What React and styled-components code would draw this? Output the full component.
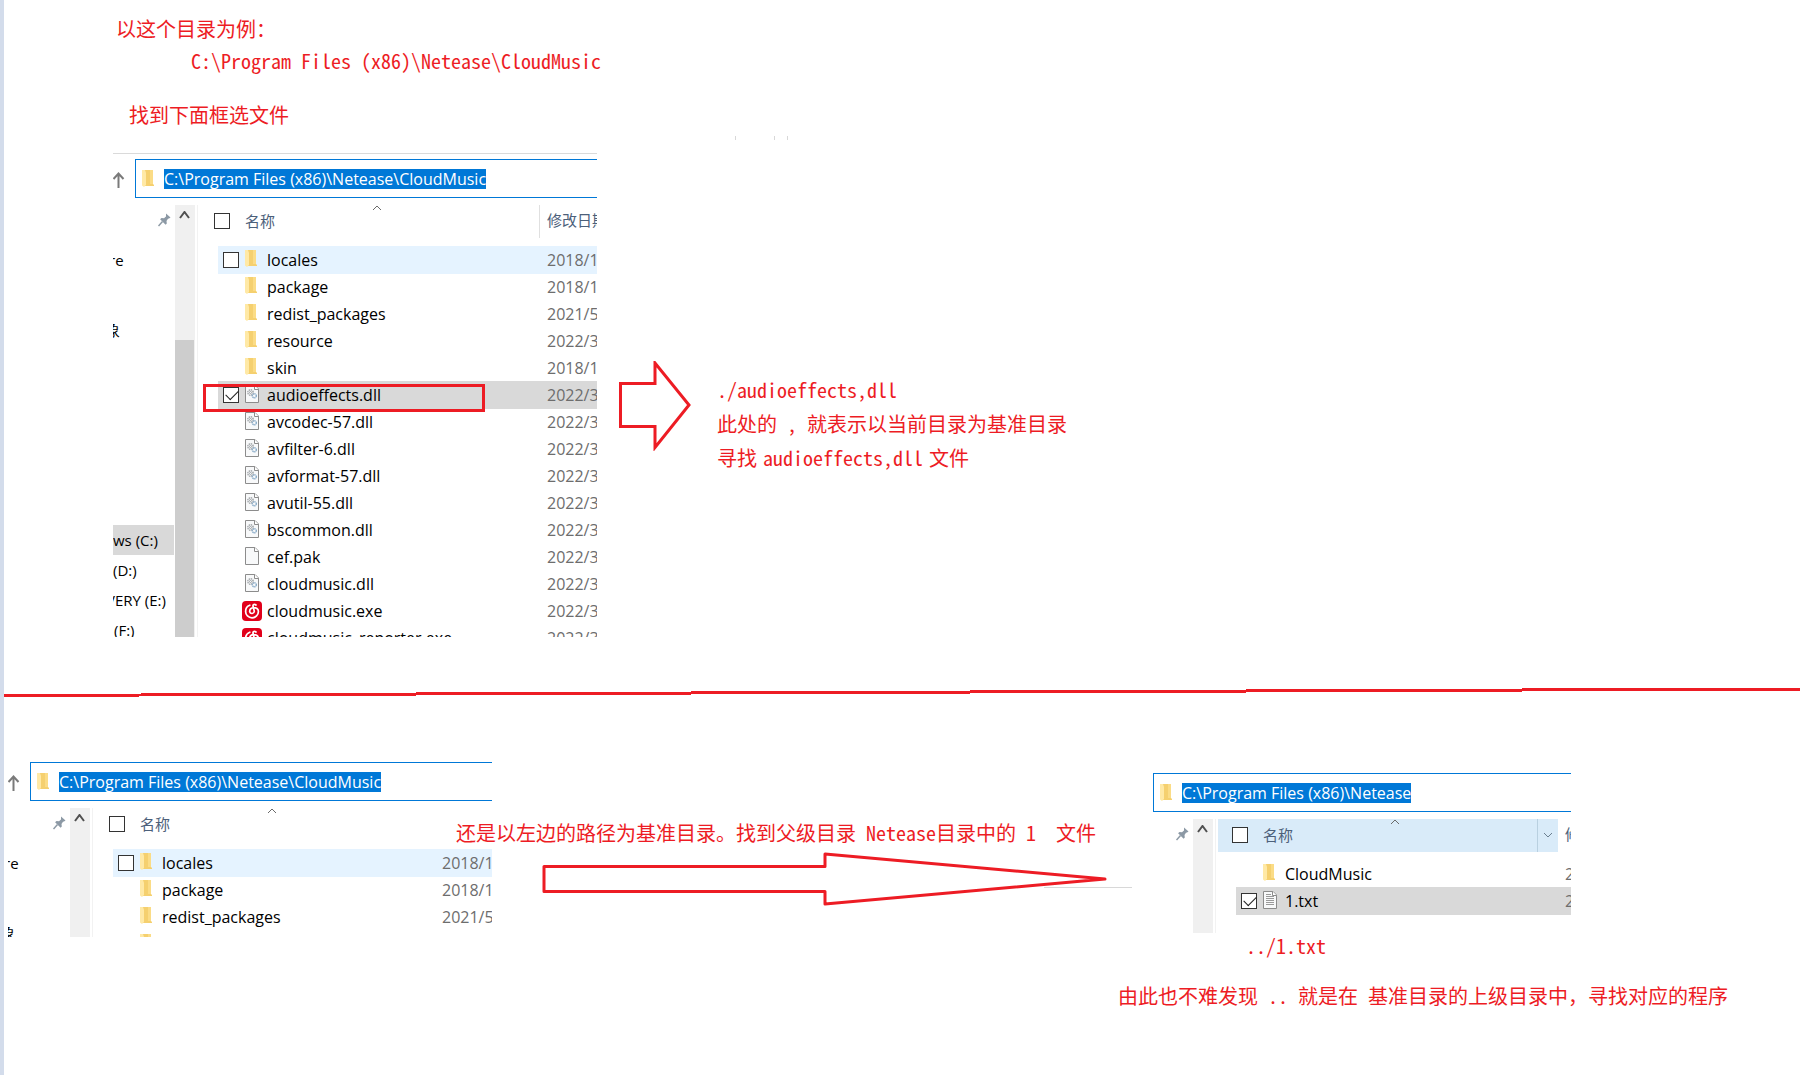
import React from 'react'
import styled, { createGlobalStyle } from 'styled-components'

const GlobalStyle = createGlobalStyle`
    * {
        box-sizing: border-box;
    }
    body {
        margin: 0;
        background-color: white;
        font-family: "Open Sans", "Noto Sans", "Noto Sans CJK SC", sans-serif;
    }
`
const Page = styled.div`
    display: flex;
    min-height: 100vh;
    overflow: hidden;
`
const Edge = styled.div`
    flex: none;
    width: 4px;
    background-color: #d3dceb;
`
const Canvas = styled.main`
    flex: 1;
    min-width: 0;
`
const Note = styled.p`
    margin: ${(props) => props.$top || 0}px 0 0 ${(props) => props.$left || 0}px;
    font-family: "Noto Sans Mono CJK SC", "Noto Sans CJK SC", monospace;
    font-size: 20px;
    line-height: 30px;
    white-space: pre;
    color: #ed1c24;
`
const Inline = styled.div`
    display: flex;
    gap: 6px;
`
const TopPart = styled.section`
    position: relative;
    padding: 14px 0 0 109px;
`
const Marks = styled.svg`
    position: absolute;
    left: 731px;
    top: 136px;
`
const TopRow = styled.div`
    display: flex;
    align-items: flex-start;
    margin-top: 22px;
`
const FirstArrow = styled.svg`
    flex: none;
    margin: 209px 26px 0 22px;
`
const TopNotes = styled.div`
    display: flex;
    flex-direction: column;
    gap: 4px;
    margin-top: 223px;
`
const Divider = styled.svg`
    display: block;
    width: 100%;
    height: 14px;
    margin: 49px 0 62px;
`
const BottomPart = styled.section`
    display: flex;
    align-items: flex-start;
    padding: 0 72px 0 4px;
`
const Middle = styled.div`
    position: relative;
    flex: 1;
    min-width: 660px;
    margin: 56px 0 0 -36px;
`
const LongArrow = styled.svg`
    display: block;
    margin: 3px 0 0 86px;
`
const Right = styled.div`
    flex: none;
    width: 610px;
    padding-top: 11px;
`

const Panel = styled.div`
    position: relative;
    flex: none;
    width: ${(props) => props.$width}px;
    height: ${(props) => props.$height}px;
    margin-left: ${(props) => props.$left || 0}px;
    overflow: hidden;
    background-color: white;
`
const TopLine = styled.div`
    height: 7px;
    border-top: 1px solid white;
    box-shadow: inset 0 1px 0 #dadada;
`
const AddressRow = styled.div`
    display: flex;
    align-items: center;
    height: 39px;
`
const UpButton = styled.button`
    display: flex;
    width: 22px;
    padding: 3px 0 0;
    border: 0;
    background: none;
`
const AddressBox = styled.div`
    flex: 1;
    display: flex;
    align-items: center;
    height: 39px;
    padding-left: 6px;
    border: 1px solid #0078d7;
    border-right: 0;
`
const AddressInput = styled.input`
    field-sizing: content;
    height: 20px;
    margin-left: 8px;
    padding: 0;
    border: 0;
    outline: 0;
    background-color: #0078d7;
    color: white;
    font-family: inherit;
    font-size: 16px;
    line-height: 20px;
`
const Body = styled.div`
    display: flex;
    height: 100%;
    margin-top: 7px;
`
const Tree = styled.div`
    flex: none;
    width: ${(props) => props.$width}px;
`
const PinBox = styled.div`
    display: flex;
    justify-content: flex-end;
    height: 40px;
    padding: 8px 4px 0 0;
`
const TreeItem = styled.div`
    height: 30px;
    width: 61px;
    margin-top: ${(props) => props.$top || 0}px;
    overflow: hidden;
    font-size: 15px;
    line-height: 30px;
    white-space: nowrap;
    text-indent: ${(props) => props.$cut || 0}px;
    background-color: ${(props) => (props.$on ? '#d9d9d9' : 'transparent')};
`
const ScrollBar = styled.div`
    flex: none;
    width: 20px;
    background-color: #f0f0f0;
`
const ScrollButton = styled.button`
    display: flex;
    justify-content: center;
    width: 19px;
    height: 135px;
    padding: 6px 0 0;
    border: 0;
    background: none;
`
const Thumb = styled.div`
    width: 19px;
    height: 100%;
    background-color: #cdcdcd;
`
const FileTable = styled.table`
    flex: none;
    display: block;
    margin-left: 2px;
    padding-left: 2px;
    border-left: 1px solid #f2f2f2;
    border-spacing: 0;
    thead, tbody {
        display: block;
    }
    th, td {
        padding: 0;
        font-weight: normal;
        text-align: left;
        white-space: nowrap;
    }
`
const HeadRow = styled.tr`
    display: flex;
    height: 33px;
    margin-bottom: 8px;
    font-size: 15px;
    line-height: 30px;
    color: #4c607a;
`
const HeadName = styled.th`
    position: relative;
    display: flex;
    align-items: center;
    gap: 15px;
    width: 340px;
    padding: 0 0 1px 14px !important;
    background-color: ${(props) => (props.$hot ? '#d9ebf9' : 'transparent')};
    border-right: 1px solid ${(props) => (props.$line ? '#e0e0e0' : 'transparent')};
`
const SortMark = styled.svg`
    position: absolute;
    left: 172px;
    top: 0;
`
const DropButton = styled.button`
    display: flex;
    align-items: center;
    justify-content: center;
    width: 20px;
    height: 33px;
    margin-left: auto;
    padding: 0;
    border: 0;
    border-left: 1px solid #b9d0e0;
    background: none;
`
const HeadDate = styled.th`
    padding-left: 7px !important;
`
const Row = styled.tr`
    display: flex;
    height: 28px;
    margin: 0 0 -1px 18px;
    font-size: 16px;
    line-height: 28px;
    background-color: ${(props) => props.$bg || 'transparent'};
`
const NameCell = styled.td`
    display: flex;
    align-items: center;
    width: 321px;
`
const CheckSlot = styled.span`
    display: flex;
    width: 24px;
    padding-left: 5px;
`
const Check = styled.input`
    appearance: none;
    flex: none;
    display: block;
    width: 16px;
    height: 16px;
    margin: 0;
    border: 1px solid #333;
    background-color: white;
    &:checked::after {
        content: "";
        display: block;
        width: 11px;
        height: 6px;
        margin: 2px 0 0 2px;
        border-left: 1px solid #222;
        border-bottom: 1px solid #222;
        transform: rotate(-45deg);
    }
`
const IconSlot = styled.span`
    display: flex;
    justify-content: center;
    width: 20px;
    height: 20px;
    margin-right: 5px;
    svg {
        flex: none;
    }
`
const DateCell = styled.td`
    padding-left: 8px !important;
    color: #6d6d6d;
`
const RedBox = styled.div`
    position: absolute;
    left: 90px;
    top: 232px;
    width: 282px;
    height: 28px;
    border: 3px solid #ed1c24;
`

const FolderIcon = () => (
    <svg width="14" height="18" viewBox="1 0 14 18">
        <path d="M4 0h8v14l1 1v1H4z" fill="#f5d06f" />
        <path d="M9 0h3v14h-3z" fill="#fbdc86" />
        <path d="M1 0h3l1 3v12l-2 2-2-1.500z" fill="#ffe9a6" />
    </svg>
)

const FileIcon = ({ kind }) => (
    <svg width="14" height="18" viewBox="0 0 14 18">
        <path d="M.5.5h9.500l3.500 3.500v13.500H.5z" fill="#f8f9fa" stroke="#8c8c8c" />
        <path d="M9.500.5v4h4" fill="#fff" stroke="#8c8c8c" />
        {kind === 'dll' && (
            <g fill="none">
                <circle cx="5.500" cy="7.500" r="2.700" stroke="#9a9fa3" strokeDasharray="1.400 .7" strokeWidth="1.400" />
                <circle cx="5.500" cy="7.500" r="1" stroke="#8d9296" strokeWidth=".8" />
                <circle cx="9.300" cy="10.800" r="2" stroke="#86a9c6" strokeDasharray="1.200 .5" strokeWidth="1.400" />
            </g>
        )}
        {kind === 'txt' && (
            <path d="M3 3.500h5M3 5.500h8M3 7.500h8M3 9.500h8M3 11.500h8M3 13.500h8" stroke="#9a9a9a" />
        )}
    </svg>
)

const MusicIcon = () => (
    <svg width="20" height="20" viewBox="0 0 20 20">
        <rect width="20" height="20" rx="4" fill="#e1001a" />
        <path
            d="M7.800 4.200C5 5.200 3.600 7.600 3.600 10.400a6.400 6.400 0 0 0 12.800 0C16.400 8 14.200 6.400 11.400 6.600 8.800 6.900 7.600 8.800 7.700 10.800a2.350 2.350 0 0 0 4.600-.5L11 5.300C10.700 3.500 12.400 2.800 14 4"
            fill="none"
            stroke="white"
            strokeWidth="1.700"
            strokeLinecap="round"
        />
    </svg>
)

const PinIcon = () => (
    <svg width="13" height="14" viewBox="0 0 13 14">
        <path d="M8 0.500l4.500 4-1.500 1-1 .3-1.500 2.200.3 2.500-1.200 1.200-5.500-5.500L3.500 5l2.500.2L8 3.500z" fill="#8c99a5" />
        <path d="M4.500 8.500L.5 13" stroke="#8c99a5" strokeWidth="1.500" />
    </svg>
)

const Chevron = ({ width, height, stroke, weight, down }) => (
    <svg width={width} height={height} viewBox={`0 0 ${width} ${height}`}>
        <path
            d={down ? `M1 1L${width / 2} ${height - 1}L${width - 1} 1` : `M1 ${height - 1}L${width / 2} 1L${width - 1} ${height - 1}`}
            fill="none"
            stroke={stroke}
            strokeWidth={weight}
        />
    </svg>
)

function RowIcon({ kind }) {
    if (kind === 'folder') return <FolderIcon />
    if (kind === 'exe') return <MusicIcon />
    return <FileIcon kind={kind} />
}

function Explorer({ id, path, up, line, tree, treeWidth, thumb, files, date, hot, children, ...box }) {
    return (
        <Panel $width={box.width} $height={box.height} $left={box.left}>
            {line && <TopLine />}
            <AddressRow>
                {up && (
                    <UpButton aria-label="上移">
                        <svg width="12" height="16" viewBox="0 0 12 16">
                            <path d="M5.500 16V1.500M.5 7l5-5.500 5 5.500" fill="none" stroke="#7a7a7a" strokeWidth="2" />
                        </svg>
                    </UpButton>
                )}
                <AddressBox>
                    <FolderIcon />
                    <AddressInput aria-label="地址" defaultValue={path} />
                </AddressBox>
            </AddressRow>
            <Body>
                <Tree $width={treeWidth}>
                    <PinBox><PinIcon /></PinBox>
                    {tree.map((item) => (
                        <TreeItem key={item.text} $top={item.top} $cut={item.cut} $on={item.on}>{item.text}</TreeItem>
                    ))}
                </Tree>
                <ScrollBar>
                    <ScrollButton aria-label="向上滚动">
                        <Chevron width={11} height={8} stroke="#505050" weight={2} />
                    </ScrollButton>
                    {thumb && <Thumb />}
                </ScrollBar>
                <FileTable>
                    <thead>
                        <HeadRow>
                            <HeadName $hot={hot} $line={date}>
                                <Check type="checkbox" id={`${id}-all`} />
                                <label htmlFor={`${id}-all`}>名称</label>
                                <SortMark width="10" height="6" viewBox="0 0 10 6">
                                    <path d="M1 5l4-4 4 4" fill="none" stroke="#6b6b6b" />
                                </SortMark>
                                {hot && (
                                    <DropButton aria-label="筛选">
                                        <Chevron width={10} height={6} stroke="#6b7f90" weight={1} down />
                                    </DropButton>
                                )}
                            </HeadName>
                            {(date || hot) && <HeadDate>修改日期</HeadDate>}
                        </HeadRow>
                    </thead>
                    <tbody>
                        {files.map((file) => (
                            <Row key={file.name} $bg={file.bg}>
                                <NameCell>
                                    <CheckSlot>
                                        {file.bg && <Check type="checkbox" id={`${id}-${file.name}`} defaultChecked={file.checked} />}
                                    </CheckSlot>
                                    <IconSlot><RowIcon kind={file.kind} /></IconSlot>
                                    {file.bg ? <label htmlFor={`${id}-${file.name}`}>{file.name}</label> : file.name}
                                </NameCell>
                                <DateCell>{file.date}</DateCell>
                            </Row>
                        ))}
                    </tbody>
                </FileTable>
            </Body>
            {children}
        </Panel>
    )
}

const folders = [
    { name: 'locales', kind: 'folder', date: '2018/1', bg: '#e5f3ff' },
    { name: 'package', kind: 'folder', date: '2018/1' },
    { name: 'redist_packages', kind: 'folder', date: '2021/5' },
    { name: 'resource', kind: 'folder', date: '2022/3' },
]
const allFiles = [
    ...folders,
    { name: 'skin', kind: 'folder', date: '2018/1' },
    { name: 'audioeffects.dll', kind: 'dll', date: '2022/3', bg: '#d9d9d9', checked: true },
    { name: 'avcodec-57.dll', kind: 'dll', date: '2022/3' },
    { name: 'avfilter-6.dll', kind: 'dll', date: '2022/3' },
    { name: 'avformat-57.dll', kind: 'dll', date: '2022/3' },
    { name: 'avutil-55.dll', kind: 'dll', date: '2022/3' },
    { name: 'bscommon.dll', kind: 'dll', date: '2022/3' },
    { name: 'cef.pak', kind: 'pak', date: '2022/3' },
    { name: 'cloudmusic.dll', kind: 'dll', date: '2022/3' },
    { name: 'cloudmusic.exe', kind: 'exe', date: '2022/3' },
    { name: 'cloudmusic_reporter.exe', kind: 'exe', date: '2022/3' },
]
const parentFiles = [
    { name: 'CloudMusic', kind: 'folder', date: '2022/3' },
    { name: '1.txt', kind: 'txt', date: '2022/3', bg: '#d9d9d9', checked: true },
]
const shortTree = [
    { text: 're', cut: -4 },
    { text: '象', top: 40, cut: -8 },
]
const fullTree = [
    ...shortTree,
    { text: 'ws (C:)', top: 180, on: true },
    { text: '(D:)' },
    { text: 'VERY (E:)', cut: -7 },
    { text: '(F:)', cut: 1 },
]

function App() {
    return (
        <>
            <GlobalStyle />
            <Page>
                <Edge />
                <Canvas>
                    <TopPart>
                        <Note $left={3}>以这个目录为例：</Note>
                        <Note $left={78} $top={2}>{'C:\\Program Files (x86)\\Netease\\CloudMusic'}</Note>
                        <Note $left={16} $top={24}>找到下面框选文件</Note>
                        <Marks width="60" height="4">
                            <path d="M.5 0v4M39.500 0v4M52.500 0v4" stroke="#d8d8d8" />
                        </Marks>
                        <TopRow>
                            <Explorer
                                id="main"
                                width={484}
                                height={485}
                                path={'C:\\Program Files (x86)\\Netease\\CloudMusic'}
                                up
                                line
                                date
                                thumb
                                tree={fullTree}
                                treeWidth={62}
                                files={allFiles}
                            >
                                <RedBox />
                            </Explorer>
                            <FirstArrow width="72" height="90" viewBox="0 0 72 90">
                                <path d="M1.500 22.500H36V2L70 44 36 86.500V65.500H1.500z" fill="none" stroke="#ed1c24" strokeWidth="3" />
                            </FirstArrow>
                            <TopNotes>
                                <Note>./audioeffects,dll</Note>
                                <Note>此处的 , 就表示以当前目录为基准目录</Note>
                                <Inline>
                                    <Note>寻找</Note>
                                    <Note>audioeffects,dll</Note>
                                    <Note>文件</Note>
                                </Inline>
                            </TopNotes>
                        </TopRow>
                    </TopPart>
                    <Divider viewBox="0 0 1796 14" preserveAspectRatio="none">
                        <path d="M0 9.500L1796 3" stroke="#ed1c24" strokeWidth="3" shapeRendering="crispEdges" />
                    </Divider>
                    <BottomPart>
                        <Explorer
                            id="base"
                            width={484}
                            height={175}
                            path={'C:\\Program Files (x86)\\Netease\\CloudMusic'}
                            up
                            tree={shortTree}
                            treeWidth={62}
                            files={folders}
                        />
                        <Middle>
                            <Note>还是以左边的路径为基准目录。找到父级目录 Netease目录中的 1  文件</Note>
                            <LongArrow width="592" height="56" viewBox="0 0 592 56">
                                <path d="M502 36.500H590" stroke="#d8d8d8" />
                                <path d="M2 15.500H283V3L563 28 283 53V40.500H2z" fill="none" stroke="#ed1c24" strokeWidth="3" strokeLinejoin="round" />
                            </LongArrow>
                        </Middle>
                        <Right>
                            <Explorer
                                id="parent"
                                width={418}
                                height={160}
                                left={35}
                                path={'C:\\Program Files (x86)\\Netease'}
                                hot
                                tree={[]}
                                treeWidth={40}
                                files={parentFiles}
                            />
                            <Note $left={128} $top={-2}>../1.txt</Note>
                            <Note $top={20}>由此也不难发现 .. 就是在 基准目录的上级目录中，寻找对应的程序</Note>
                        </Right>
                    </BottomPart>
                </Canvas>
            </Page>
        </>
    )
}

export default App
